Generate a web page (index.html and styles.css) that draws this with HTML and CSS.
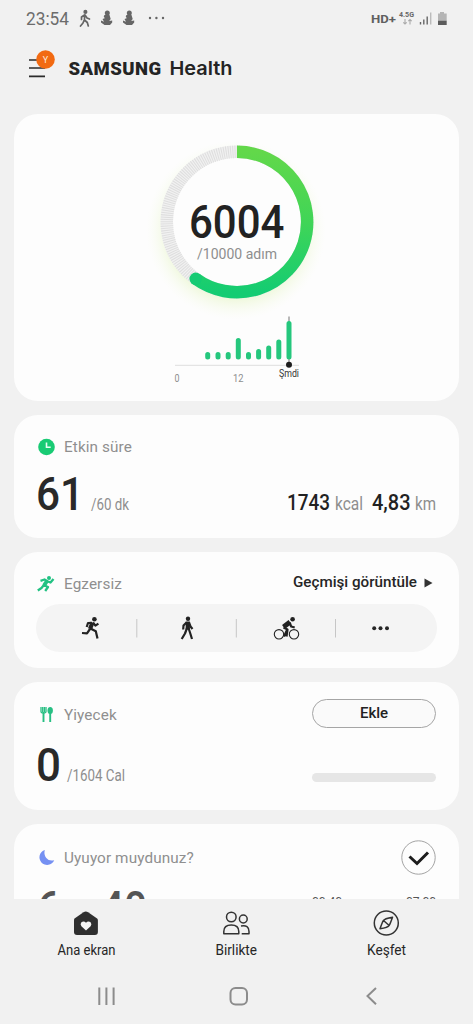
FILE: index.html
```html
<!DOCTYPE html>
<html lang="tr">
<head>
<meta charset="utf-8">
<title>Samsung Health</title>
<link rel="stylesheet" href="styles.css">
</head>
<body>
<div class="phone">
  <header class="top">
    <svg width="473" height="100" viewBox="0 0 473 100">
      <g class="status">
        <text class="clock" x="26" y="25" textLength="43" lengthAdjust="spacingAndGlyphs">23:54</text>
        <g fill="none" stroke="#666" stroke-width="1.7" stroke-linecap="round" stroke-linejoin="round">
          <circle cx="85.4" cy="11.9" r="1.2" fill="#666"/>
          <path d="M84.5 15v5l2.8 2.5 1 3.500M84 20.500l-1 2.500-2.500 3M84.500 15l-3 2v2.500M85 15l2 3 2.500 1"/>
        </g>
        <g id="figure" fill="#666">
          <circle cx="107.300" cy="12.900" r="2.500"/>
          <path d="M104.500 15h5l1.200 4-1.500 2 3-.5v2l-2.200 2.500h-5.500l-3.500-2.500v-2l3 1.300-1.500-2.800 2.200-.8-1-2z"/>
        </g>
        <use href="#figure" x="22"/>
        <g fill="#666"><circle cx="150" cy="18" r="1.200"/><circle cx="156.400" cy="18" r="1.200"/><circle cx="163" cy="18" r="1.200"/></g>
        <text class="hd" x="371" y="22.500" textLength="25" lengthAdjust="spacingAndGlyphs">HD+</text>
        <text class="gen" x="399" y="17.200" textLength="15" lengthAdjust="spacingAndGlyphs">4.5G</text>
        <path d="M405 19v5m-1.700-1.700 1.700 1.700 1.700-1.700M410 24.500v-5m-1.700 1.700 1.700-1.700 1.700 1.700" fill="none" stroke="#aaa" stroke-width="1.100"/>
        <path d="M420.500 22v2.500M423.800 19.500v5M427.200 16.500v8" stroke="#666" stroke-width="1.400"/>
        <path d="M430.700 12.500v12" stroke="#bbb" stroke-width="1.400"/>
        <path d="M438 13.500h2V12h4v1.500h2.700V21H438z" fill="#b5b5b5"/>
        <path d="M438 20.800h8.700v4.200H438z" fill="#5c5c5c"/>
      </g>
      <path d="M29 60h13M29 68h16M29 76.300h16" stroke="#2b2b2b" stroke-width="1.700"/>
      <circle cx="45.500" cy="59.500" r="9.300" fill="#f26a12"/>
      <text class="badge" x="45.500" y="62.700">Y</text>
      <text class="brand" x="68.500" y="75" textLength="92.500" lengthAdjust="spacing">SAMSUNG</text>
      <text class="product" x="169.500" y="75" textLength="63" lengthAdjust="spacingAndGlyphs">Health</text>
    </svg>
  </header>

  <main class="feed">
    <section class="card steps">
      <svg width="445" height="286" viewBox="14 114 445 286">
        <defs>
          <linearGradient id="ring" x1="0" y1="0" x2="0" y2="1"><stop offset="0" stop-color="#62d84a"/><stop offset=".5" stop-color="#40d557"/><stop offset="1" stop-color="#14cc72"/></linearGradient>
          <radialGradient id="glow"><stop offset=".72" stop-color="#d9f0a8" stop-opacity=".5"/><stop offset="1" stop-color="#f4fbe4" stop-opacity="0"/></radialGradient>
        </defs>
        <circle cx="236" cy="230" r="90" fill="url(#glow)"/>
        <circle cx="237" cy="222" r="70" fill="#fdfdfd"/>
        <circle cx="237" cy="222" r="70.200" fill="none" stroke="#f1f1f1" stroke-width="12.500"/>
        <circle cx="237" cy="222" r="70.200" fill="none" stroke="#dedede" stroke-width="12.500" stroke-dasharray="1 1.200"/>
        <path d="M237 151.800A70.200 70.200 0 1 1 195.700 278.800" fill="none" stroke="url(#ring)" stroke-width="12.500"/>
        <circle cx="195.700" cy="278.800" r="6.250" fill="#15cb73"/>
        <text class="count" x="189" y="238" textLength="95.500" lengthAdjust="spacingAndGlyphs">6004</text>
        <text class="goal" x="197" y="259" textLength="80" lengthAdjust="spacingAndGlyphs">/10000 adım</text>
        <path d="M175 365.300h124" stroke="#dedede"/>
        <path d="M289 316.500V365" stroke="#8a8a8a" stroke-width="1.200"/>
        <path d="M207.700 354.500v2.500M218 354.500v2.500M228.200 354.500v2.500M238.300 340.500V357M248.500 354.500v2.500M258.600 351.500V357M268.700 348V357M278.800 342V357M289 323.500V357" stroke="#25c77d" stroke-width="5" stroke-linecap="round"/>
        <circle cx="289" cy="364.800" r="3" fill="#1d1d1d"/>
        <g class="axis"><text x="174.500" y="382" textLength="5" lengthAdjust="spacingAndGlyphs">0</text><text x="233" y="382" textLength="10.500" lengthAdjust="spacingAndGlyphs">12</text></g>
        <text class="now" x="279" y="376.500" textLength="20" lengthAdjust="spacingAndGlyphs">Şmdi</text>
      </svg>
    </section>

    <section class="card active">
      <div class="row">
        <svg class="icon" width="18" height="18" viewBox="0 0 18 18"><circle cx="9.500" cy="9" r="8.300" fill="#19cb74"/><path d="M9.500 4.500V9.200h4.200" fill="none" stroke="#e9fff3" stroke-width="1.600"/></svg>
        <h2>Etkin süre</h2>
      </div>
      <svg class="values" width="400" height="44" viewBox="37 471 400 44">
        <text class="big" x="36" y="510" textLength="48" lengthAdjust="spacingAndGlyphs">61</text>
        <text class="unit" x="91" y="510" textLength="38" lengthAdjust="spacingAndGlyphs">/60 dk</text>
        <text class="mid" x="287" y="510" textLength="43" lengthAdjust="spacingAndGlyphs">1743</text>
        <text class="unit large" x="335" y="510" textLength="28" lengthAdjust="spacingAndGlyphs">kcal</text>
        <text class="mid" x="372" y="510" textLength="38.500" lengthAdjust="spacingAndGlyphs">4,83</text>
        <text class="unit large" x="415" y="510" textLength="21" lengthAdjust="spacingAndGlyphs">km</text>
      </svg>
    </section>

    <section class="card exercise">
      <div class="row">
        <svg class="icon" width="18" height="18" viewBox="0 0 18 18"><circle cx="12" cy="2.900" r="2" fill="#22c283"/><path d="M10 6L7 10.500" fill="none" stroke="#22c283" stroke-width="4"/><path d="M3.500 5.800L7.500 4.500l3.500 2 2.500 1 3-3.500M6.500 10l4.500 2-2.800 4M6.500 10.500L4.500 13 .8 15.500" fill="none" stroke="#22c283" stroke-width="2.300" stroke-linejoin="round"/></svg>
        <h2>Egzersiz</h2>
        <a class="history">Geçmişi görüntüle</a>
        <svg class="arrow" width="9" height="10" viewBox="0 0 9 10"><path d="M.5.500v9L8.500 5z" fill="#333"/></svg>
      </div>
      <div class="sports">
        <svg width="400" height="48" viewBox="37 604 400 48">
          <path d="M136.800 619v18.500M236.300 619v18.500M335.500 619v18.500" stroke="#c6c6c6"/>
          <g fill="none" stroke="#222" stroke-linejoin="round">
            <circle cx="94.400" cy="619.300" r="2.300" fill="#222" stroke="none"/>
            <path d="M92.500 622.500l-2.500 6.500" stroke-width="4.200"/>
            <path d="M92 622.800l-4 .2-1.300 4M93 622.500l2.400 3.200 3-2M90.500 628.500l5.300 2.800 1.700 7.200M90 629l-3 4.300-5-.3" stroke-width="2.200"/>
            <circle cx="188" cy="618.700" r="2.200" fill="#222" stroke="none"/>
            <path d="M187.800 621.500v8" stroke-width="4.200"/>
            <path d="M186.500 622.500l-3 3-.3 4M189 622.500l1.500 4 2 2.500M187 628l-2 5.500-3.300 5.500M188.500 628l1.800 5.500 1.700 5.500" stroke-width="2.200"/>
            <circle cx="279" cy="634.300" r="4.700" stroke-width="1.100"/><circle cx="294" cy="634.300" r="4.700" stroke-width="1.100"/>
            <circle cx="292.600" cy="619.200" r="2.300" fill="#222" stroke="none"/>
            <path d="M290 622l-6.500 5" stroke-width="4.800"/>
            <path d="M289.500 622.500l1.700 4 3.500 1M283.500 627.500l4 2-1 7M287 630l-3 6.500" stroke-width="2.200"/>
          </g>
          <g fill="#262626"><circle cx="374.200" cy="628.300" r="2"/><circle cx="380.500" cy="628.300" r="2"/><circle cx="387" cy="628.300" r="2"/></g>
        </svg>
      </div>
    </section>

    <section class="card food">
      <div class="row">
        <svg class="icon" width="18" height="18" viewBox="0 0 18 18"><path d="M4 1v4.500q0 1.500 2.500 1.500T9 5.500V1M5.700 1v5M7.400 1v5" fill="none" stroke="#27bf83" stroke-width="1.300"/><path d="M6.500 6v10M13.200 7v9" stroke="#27bf83" stroke-width="1.900"/><ellipse cx="13.200" cy="4.500" rx="2.700" ry="3.600" fill="#27bf83"/></svg>
        <h2>Yiyecek</h2>
        <button class="add">Ekle</button>
      </div>
      <div class="amount">
        <svg width="100" height="44" viewBox="37 742 100 44">
          <text class="big" x="36" y="781" textLength="25" lengthAdjust="spacingAndGlyphs">0</text>
          <text class="unit" x="67" y="781" textLength="58" lengthAdjust="spacingAndGlyphs">/1604 Cal</text>
        </svg>
        <div class="meter"></div>
      </div>
    </section>

    <section class="card sleep">
      <div class="row">
        <svg class="icon" width="18" height="18" viewBox="0 0 18 18"><path d="M7.800.900A7.700 7.700 0 1 0 17.200 11.300Q12 12.500 9.300 9 6.500 5.500 7.800.900z" fill="#7590f2"/></svg>
        <h2>Uyuyor muydunuz?</h2>
        <svg class="check" width="35" height="35" viewBox="0 0 35 35"><circle cx="17.500" cy="17.500" r="16.700" fill="#fdfdfd" stroke="#999" stroke-width=".9"/><path d="M8.500 16.500l7.500 7L27 12.500" fill="none" stroke="#1d1d1d" stroke-width="3"/></svg>
      </div>
      <svg class="values" width="400" height="50" viewBox="37 884 400 50">
        <text class="big faded" x="37" y="924" textLength="24" lengthAdjust="spacingAndGlyphs">6</text>
        <text class="big faded" x="101" y="924" textLength="46" lengthAdjust="spacingAndGlyphs">40</text>
        <text class="time" x="312" y="906" textLength="30" lengthAdjust="spacingAndGlyphs">00:40</text>
        <text class="time" x="406" y="906" textLength="30" lengthAdjust="spacingAndGlyphs">07:00</text>
      </svg>
    </section>
  </main>

  <nav class="tabs">
    <svg width="473" height="76" viewBox="0 899 473 76">
      <path d="M74.500 918.500l9-6.200q2.300-1.500 4.600 0l9 6.200q.8.700.8 2v11.500q0 3-3 3H77q-3 0-3-3v-11.500q0-1.300.5-2z" fill="#2f2f2f"/>
      <path d="M86 930.500l-4.600-4.300q-1.600-2 0-3.900 2.400-1.800 4.600.5 2.200-2.300 4.600-.5 1.600 1.900 0 3.900z" fill="#f4f4f4"/>
      <g fill="none" stroke="#333" stroke-width="1.500" stroke-linejoin="round">
        <circle cx="231.300" cy="917" r="4.800"/><path d="M223.800 933.800v-2.300q0-6.500 7.500-6.500t7.500 6.500v2.300z"/>
        <circle cx="243.300" cy="919" r="3.900"/><path d="M241 926q8-1.500 8 5.500v2.300h-7.300"/>
        <circle cx="386.300" cy="923" r="12"/><path d="M392.500 917.200q-8 1.300-9.200 3.400t-3.300 8.200q8-1.300 9.200-3.400t3.300-8.200zM383.500 920.500l5.700 5"/>
      </g>
      <g class="tab"><text x="57.500" y="954.500" textLength="58" lengthAdjust="spacingAndGlyphs">Ana ekran</text><text x="215.500" y="954.500" textLength="41.500" lengthAdjust="spacingAndGlyphs">Birlikte</text><text x="367" y="954.500" textLength="39" lengthAdjust="spacingAndGlyphs">Keşfet</text></g>
    </svg>
  </nav>
  <footer class="system">
    <svg width="473" height="49" viewBox="0 975 473 49"><g fill="none" stroke="#8c8c8c" stroke-width="2"><path d="M99.300 987.500v17.500M106.400 987.500v17.500M113.600 987.500v17.500"/><rect x="230.500" y="988" width="16.500" height="16.500" rx="5"/><path d="M376 988l-8.500 8 8.500 8.200"/></g></svg>
  </footer>
</div>
</body>
</html>
```

FILE: styles.css
```css
* { box-sizing: border-box; }
body { margin: 0; background: #f1f1f1; font-family: Roboto, "Noto Sans", sans-serif; color: #262626; }
svg { display: block; flex: none; overflow: visible; }
.phone { display: flex; flex-direction: column; width: 473px; height: 1024px; overflow: hidden; }
.top { height: 114px; flex: none; }
.clock { font-size: 17.5px; fill: #6c6c6c; }
.hd { font-size: 11.5px; font-weight: 700; fill: #606060; }
.gen { font-size: 7.5px; font-weight: 700; fill: #666; }
.badge { font-size: 9px; fill: #ffe9d8; text-anchor: middle; }
.brand { font: 900 18.5px Roboto, sans-serif; fill: #242424; }
.product { font: 600 19px Inter, sans-serif; fill: #242424; }

.feed { flex: 1; min-height: 0; overflow: hidden; display: flex; flex-direction: column; gap: 14px; padding: 0 14px; }
.card { flex: none; background: #fdfdfd; border-radius: 24px; padding: 0 23px; }
.steps { height: 287px; padding: 0; }
.active { height: 123px; padding-top: 22px; }
.exercise { height: 116px; padding-top: 22px; }
.food { height: 128px; padding-top: 16px; }
.sleep { height: 140px; padding-top: 16px; }
.row { display: flex; align-items: center; height: 20px; }
.food .row { height: 30px; }
.food .icon { margin-top: 3px; }
.food h2 { padding-top: 3px; }
.sleep .row { height: 35px; }
h2 { margin: 0 0 0 9px; font-size: 15.3px; font-weight: 400; line-height: 20px; color: #8f8f8f; letter-spacing: .1px; }

.count { font-size: 47px; font-weight: 500; fill: #222; }
.goal { font-size: 14.5px; fill: #8e8e8e; }
.axis { font-size: 10px; fill: #8e8e8e; }
.now { font-size: 10.5px; fill: #333; }
.big { font-size: 47px; font-weight: 500; fill: #292929; }
.faded { fill: #555; }
.unit { font-size: 16px; fill: #8e8e8e; }
.large { font-size: 18px; }
.mid { font-size: 22.5px; font-weight: 500; fill: #222; }
.time { font-size: 13px; fill: #555; }
.values { margin-top: 14px; }
.sleep .values { margin-top: 9px; }

.history { margin: -4px 0 0 auto; font-size: 15.2px; font-weight: 500; }
.arrow { margin: -3px 3px 0 7px; }
.sports { width: 401px; height: 48px; margin: 10px 0 0 -1px; padding-left: 1px; border-radius: 24px; background: #f4f4f4; }
.add { margin-left: auto; width: 124px; height: 29px; border: 1px solid #a5a5a5; border-radius: 15px; background: #fafafa; color: #222; font: 500 15px Roboto, sans-serif; padding: 0; }
.amount { display: flex; justify-content: space-between; margin-top: 14px; }
.meter { width: 124px; height: 9px; margin-top: 31px; border-radius: 5px; background: #e6e6e6; }
.check { margin-left: auto; }

.tabs { height: 76px; flex: none; background: #f1f1f1; }
.tab { font-size: 15px; fill: #262626; }
.system { height: 49px; flex: none; }
```
